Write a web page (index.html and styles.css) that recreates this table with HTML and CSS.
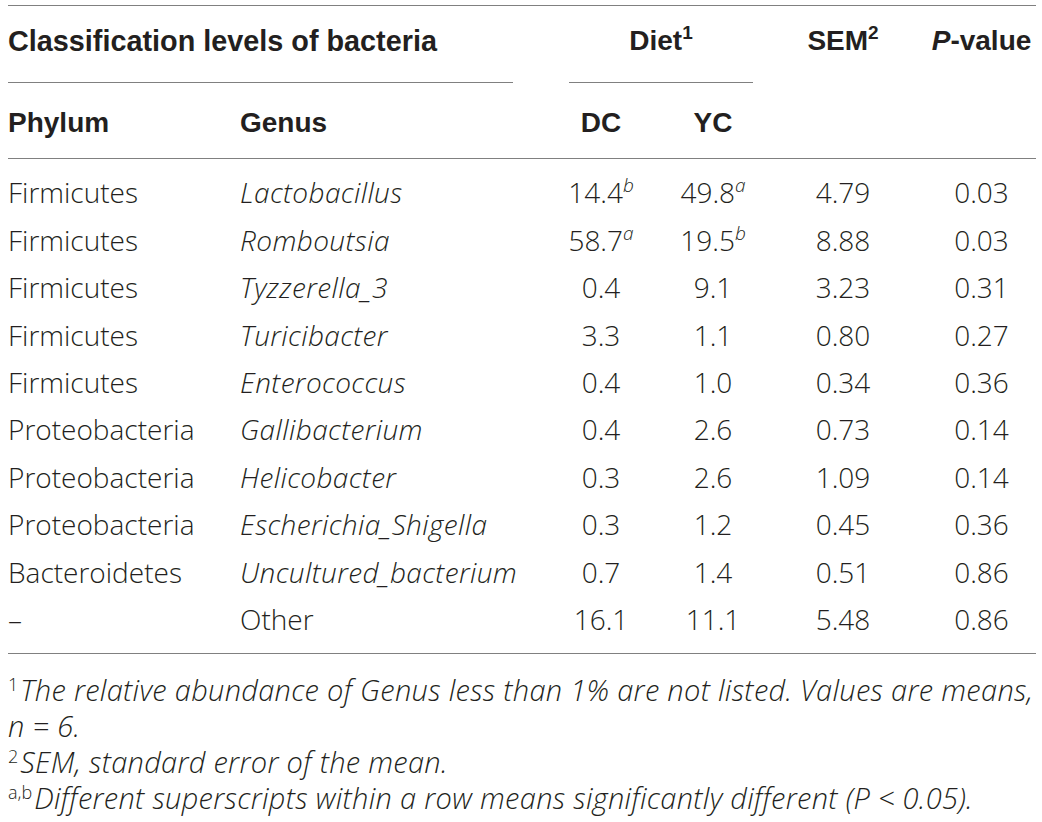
FILE: index.html
```html
<!DOCTYPE html>
<html lang="en">
<head>
    <meta charset="UTF-8">
    <meta name="viewport" content="width=device-width, initial-scale=1.0">
    <title>Classification levels of bacteria</title>
    <link rel="stylesheet" href="styles.css">
</head>
<body>
    <table class="data-table">
        <colgroup>
            <col class="col-phylum">
            <col class="col-genus">
            <col class="col-dc">
            <col class="col-yc">
            <col class="col-sem">
            <col class="col-p">
        </colgroup>
        <thead>
            <tr class="head-top">
                <th colspan="2" class="group"><div class="group-label class-label">Classification levels of bacteria</div></th>
                <th colspan="2" class="group"><div class="group-label diet-label">Diet<sup>1</sup></div></th>
                <th class="num">SEM<sup>2</sup></th>
                <th class="num pval"><i>P</i>-value</th>
            </tr>
            <tr class="head-sub">
                <th>Phylum</th>
                <th>Genus</th>
                <th class="num">DC</th>
                <th class="num">YC</th>
                <th></th>
                <th></th>
            </tr>
        </thead>
        <tbody>
            <tr>
                <td>Firmicutes</td>
                <td><i>Lactobacillus</i></td>
                <td class="num">14.4<sup><i>b</i></sup></td>
                <td class="num">49.8<sup><i>a</i></sup></td>
                <td class="num">4.79</td>
                <td class="num pval">0.03</td>
            </tr>
            <tr>
                <td>Firmicutes</td>
                <td><i>Romboutsia</i></td>
                <td class="num">58.7<sup><i>a</i></sup></td>
                <td class="num">19.5<sup><i>b</i></sup></td>
                <td class="num">8.88</td>
                <td class="num pval">0.03</td>
            </tr>
            <tr>
                <td>Firmicutes</td>
                <td><i>Tyzzerella_3</i></td>
                <td class="num">0.4</td>
                <td class="num">9.1</td>
                <td class="num">3.23</td>
                <td class="num pval">0.31</td>
            </tr>
            <tr>
                <td>Firmicutes</td>
                <td><i>Turicibacter</i></td>
                <td class="num">3.3</td>
                <td class="num">1.1</td>
                <td class="num">0.80</td>
                <td class="num pval">0.27</td>
            </tr>
            <tr>
                <td>Firmicutes</td>
                <td><i>Enterococcus</i></td>
                <td class="num">0.4</td>
                <td class="num">1.0</td>
                <td class="num">0.34</td>
                <td class="num pval">0.36</td>
            </tr>
            <tr>
                <td>Proteobacteria</td>
                <td><i>Gallibacterium</i></td>
                <td class="num">0.4</td>
                <td class="num">2.6</td>
                <td class="num">0.73</td>
                <td class="num pval">0.14</td>
            </tr>
            <tr>
                <td>Proteobacteria</td>
                <td><i>Helicobacter</i></td>
                <td class="num">0.3</td>
                <td class="num">2.6</td>
                <td class="num">1.09</td>
                <td class="num pval">0.14</td>
            </tr>
            <tr>
                <td>Proteobacteria</td>
                <td><i>Escherichia_Shigella</i></td>
                <td class="num">0.3</td>
                <td class="num">1.2</td>
                <td class="num">0.45</td>
                <td class="num pval">0.36</td>
            </tr>
            <tr>
                <td>Bacteroidetes</td>
                <td><i>Uncultured_bacterium</i></td>
                <td class="num">0.7</td>
                <td class="num">1.4</td>
                <td class="num">0.51</td>
                <td class="num pval">0.86</td>
            </tr>
            <tr>
                <td>–</td>
                <td>Other</td>
                <td class="num">16.1</td>
                <td class="num">11.1</td>
                <td class="num">5.48</td>
                <td class="num pval">0.86</td>
            </tr>
        </tbody>
    </table>

    <div class="notes">
        <p><sup>1</sup><i>The relative abundance of Genus less than 1% are not listed. Values are means,<br>n = 6.</i></p>
        <p><sup>2</sup><i>SEM, standard error of the mean.</i></p>
        <p><sup>a,b</sup><i>Different superscripts within a row means significantly different (P &lt; 0.05).</i></p>
    </div>
</body>
</html>
```

FILE: styles.css
```css
body {
    margin: 0;
    background-color: #fff;
    color: #231f20;
    font-family: 'Liberation Sans', Arial, sans-serif;
}
.data-table {
    margin: 5px 0 0 8px;
    width: 1028px;
    border-collapse: collapse;
    border-spacing: 0;
    table-layout: fixed;
    border-top: 1px solid #808080;
    font-size: 28px;
}
.col-phylum { width: 232px; }
.col-genus { width: 321px; }
.col-dc { width: 80px; }
.col-yc { width: 144px; }
.col-sem { width: 116px; }
.col-p { width: 135px; }

th, td {
    padding: 0;
    text-align: left;
    white-space: nowrap;
}
th {
    font-weight: bold;
    line-height: 32px;
}
.class-label {
    font-size: 28.8px;
}
sup {
    font-size: 19px;
    line-height: 0;
    vertical-align: 11px;
}
.num {
    text-align: center;
}
.pval {
    padding-left: 26px;
}
.head-top th {
    vertical-align: top;
    padding-top: 19px;
}
.group-label {
    padding-bottom: 25px;
    border-bottom: 1px solid #808080;
}
.class-label {
    margin-right: 48px;
}
.diet-label {
    margin: 0 32px 0 8px;
    text-align: center;
}
.head-sub th {
    padding-top: 24px;
    padding-bottom: 19px;
    border-bottom: 1px solid #808080;
}
.head-sub th.num {
    text-align: center;
}
td {
    font-family: 'Open Sans', 'Liberation Sans', sans-serif;
    font-weight: 300;
    font-stretch: 92%;
    line-height: 31.4px;
    padding-top: 8px;
    padding-bottom: 8px;
}
td i {
    letter-spacing: 0.4px;
}
td sup i {
    letter-spacing: 0;
}
td.pval {
    padding-left: 26px;
}
tbody tr:first-child td {
    padding-top: 18.3px;
}
tbody tr:last-child td {
    padding-bottom: 18px;
    border-bottom: 1px solid #808080;
}

.notes {
    margin: 18px 0 0 8px;
    width: 1034px;
    font-family: 'Open Sans', 'Liberation Sans', sans-serif;
    font-stretch: 100%;
    font-weight: 300;
    font-size: 29px;
    letter-spacing: 0.3px;
    line-height: 36px;
    white-space: nowrap;
}
.notes p {
    margin: 0;
}
.notes sup {
    font-size: 18px;
    letter-spacing: 0;
    vertical-align: 10px;
    margin-right: 2px;
}
```
